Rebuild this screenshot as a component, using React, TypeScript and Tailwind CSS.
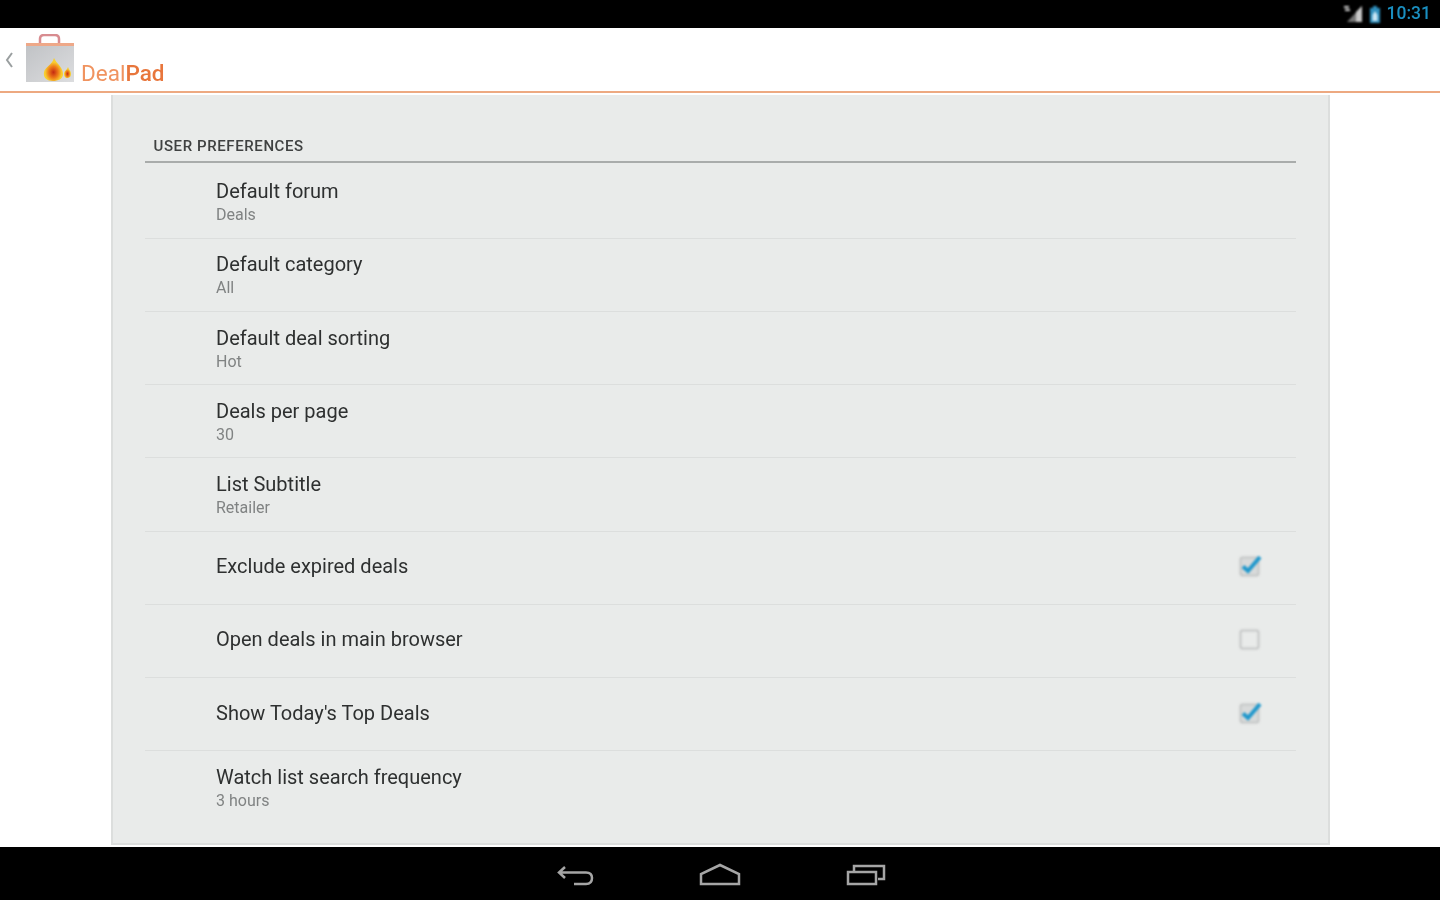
const rows: { title: string; sub?: string; check?: boolean }[] = [
  { title: "Default forum", sub: "Deals" },
  { title: "Default category", sub: "All" },
  { title: "Default deal sorting", sub: "Hot" },
  { title: "Deals per page", sub: "30" },
  { title: "List Subtitle", sub: "Retailer" },
  { title: "Exclude expired deals", check: true },
  { title: "Open deals in main browser", check: false },
  { title: "Show Today's Top Deals", check: true },
  { title: "Watch list search frequency", sub: "3 hours" },
];

function Check({ on }: { on: boolean }) {
  return (
    <svg width="28" height="28" viewBox="0 0 28 28" className="blur-[0.8px]">
      <rect x="4.5" y="5.5" width="18" height="18" rx="2" fill={on ? "#d8dada" : "none"} stroke="#c4c6c6" strokeWidth="2" />
      {on && <path d="M7 14.5 L12 19 L24 5" fill="none" stroke="#2098cc" strokeWidth="4" />}
    </svg>
  );
}

export default function App() {
  return (
    <div className="flex h-[900px] w-[1440px] flex-col overflow-hidden bg-white font-['Roboto',sans-serif]">
      <div className="flex h-[28px] shrink-0 items-center justify-end gap-[6px] bg-black pr-[9px]">
        <svg width="20" height="18" viewBox="0 0 20 18" className="blur-[0.8px]">
          <path d="M19 1 V17 H4 Z" fill="#777" />
          <path d="M19 1 V17 H13 V7 Z" fill="#c8c8c8" />
          <path d="M1 2 H6 M2 5 H7" stroke="#cfcfcf" strokeWidth="2" />
        </svg>
        <svg width="12" height="17" viewBox="0 0 12 17" className="blur-[0.8px]">
          <path d="M4 0 H8 V2 H11 V17 H1 V2 H4 Z" fill="#2f8fbd" />
          <path d="M3.5 9 L6 5 L8.5 9 V15 H3.5 Z" fill="#cde8f5" />
        </svg>
        <span className="text-[17.5px] font-medium leading-none text-[#1a8fc0] blur-[0.7px]">10:31</span>
      </div>

      <div className="flex h-[65px] shrink-0 items-center border-b-2 border-[#eda981] bg-white">
        <svg width="10" height="18" viewBox="0 0 10 18" className="ml-[4px] blur-[0.7px]">
          <path d="M8 2 L3 9 L8 16" fill="none" stroke="#9a9fa0" strokeWidth="2" />
        </svg>
        <svg width="52" height="52" viewBox="0 0 52 52" className="ml-[11px] blur-[0.7px]">
          <defs>
            <linearGradient id="bag" x1="0" y1="0" x2="1" y2="1">
              <stop offset="0" stopColor="#c0c2c5" />
              <stop offset="1" stopColor="#dcdddf" />
            </linearGradient>
            <radialGradient id="flame" cx="0.5" cy="0.62" r="0.55">
              <stop offset="0" stopColor="#c42a12" />
              <stop offset="0.45" stopColor="#ee7a18" />
              <stop offset="0.8" stopColor="#f8cf30" />
            </radialGradient>
          </defs>
          <path d="M15 11 V5 Q15 1 19 1 H30 Q34 1 34 5 V11" fill="none" stroke="#d88c90" strokeWidth="2.5" />
          <rect x="1" y="10" width="48" height="38" fill="url(#bag)" />
          <rect x="1" y="9" width="48" height="3" fill="#eea888" />
          <path d="M29 24 C31 29 38 33 38 40 C38 45 33 47 28 47 C22 47 18 44 19 38 C20 33 27 31 29 24 Z" fill="url(#flame)" />
          <path d="M43 33 C44 36 46 37 46 40 C46 43 44 44 42 44 C40 44 39 42 39 40 C39 37 42 36 43 33 Z" fill="url(#flame)" />
        </svg>
        <span className="ml-[4px] mt-[27px] text-[22.5px] leading-none text-[#f0935f] blur-[0.6px]">
          Deal<span className="font-medium text-[#e8763c]">Pad</span>
        </span>
      </div>

      <div className="flex min-h-0 flex-1 justify-center pt-[2px]">
        <div className="mb-[2px] w-[1219px] border-x-2 border-b-2 border-[#dcdedd] bg-[#e9ebea] pl-[32px] pr-[32px] pt-[37px]">
          <div className="flex h-[31px] items-center border-b-2 border-[#a9acab] pl-[9px] text-[15px] font-medium tracking-[0.6px] text-[#3f4141] blur-[0.6px]">
            USER PREFERENCES
          </div>
          <div className="pt-[2.7px]">
            {rows.map((r, i) => (
              <div
                key={r.title}
                className={`flex h-[73.2px] items-center justify-between border-b pl-[71.5px] pr-[32px] ${
                  i < rows.length - 1 ? "border-[#dcdedd]" : "border-transparent"
                } ${r.sub ? "" : "pb-[3px]"}`}
              >
                <div className="flex flex-col blur-[0.6px]">
                  <span className="text-[20px] leading-[26px] text-[#2e3030]">{r.title}</span>
                  {r.sub && <span className="text-[16px] leading-[21px] text-[#808383]">{r.sub}</span>}
                </div>
                {r.check !== undefined && <Check on={r.check} />}
              </div>
            ))}
          </div>
        </div>
      </div>

      <div className="flex h-[53px] shrink-0 items-center justify-center gap-[105px] bg-black pt-[3px]">
        <svg width="40" height="24" viewBox="0 0 40 24" className="blur-[0.7px]">
          <path d="M11 4 L5 9.5 L11 15 M5 9.5 H32 Q38 9.5 38 15 Q38 21 32 21 H20" fill="none" stroke="#a5a5a5" strokeWidth="2.5" />
        </svg>
        <svg width="42" height="24" viewBox="0 0 42 24" className="blur-[0.7px]">
          <path d="M2 21 V11 L21 2 L40 11 V21 Z" fill="none" stroke="#a5a5a5" strokeWidth="2.5" />
        </svg>
        <svg width="40" height="24" viewBox="0 0 40 24" className="blur-[0.7px]">
          <path d="M2 9 H30 V21 H2 Z M8 8 V3 H38 V16 H32" fill="none" stroke="#a5a5a5" strokeWidth="2.5" />
        </svg>
      </div>
    </div>
  );
}
